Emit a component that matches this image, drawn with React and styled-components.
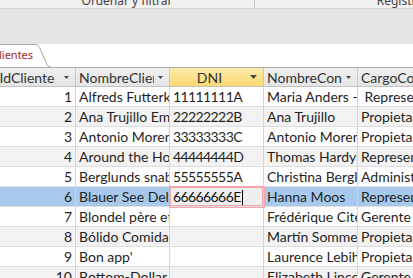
import React from "react";
import styled, { createGlobalStyle } from "styled-components";

const Global = createGlobalStyle`
  html, body { margin: 0; padding: 0; background: #ffffff; overflow: hidden; }
  #root { width: 413px; height: 278px; }
`;

const Screen = styled.div`
  width: 413px;
  height: 278px;
  overflow: hidden;
  display: flex;
  flex-direction: column;
  background: #ffffff;
`;

const GroupBar = styled.div`
  flex: none;
  height: 8px;
  display: flex;
  background: #f1f1f1;
  border-bottom: 1px solid #d3d3d3;
  overflow: hidden;
`;

const Group = styled.div`
  flex: none;
  width: ${(p) => p.$w}px;
  height: 8px;
  display: flex;
  align-items: flex-end;
  justify-content: center;
  border-right: ${(p) => (p.$sep ? "1px solid #c4c4c4" : "none")};
  box-sizing: border-box;
`;

const GroupLabel = styled.span`
  font-family: "Noto Sans", sans-serif;
  font-size: 12px;
  line-height: 12px;
  color: #444444;
  white-space: nowrap;
  margin-bottom: 1px;
`;

const Ribbon = styled.div`
  flex: none;
  height: 35px;
  background: #e4e4e4;
`;

const TabStrip = styled.div`
  flex: none;
  height: 23px;
  display: flex;
  background: #ffffff;
`;

const Tab = styled.div`
  display: flex;
  margin-left: -9px;
`;

const TabLabel = styled.div`
  border-top: 1px solid #a8a8a8;
  padding-left: 1px;
  font-family: "Noto Sans", sans-serif;
  font-size: 11px;
  line-height: 20px;
  color: #a4262c;
  white-space: nowrap;
`;

const TabEdge = () => (
  <svg width="18" height="23" viewBox="0 0 18 23" style={{ flex: "none" }}>
    <path
      d="M0 0.5 L2 0.5 C4.5 0.5 5.5 1.5 6.5 3.5 L14 20.5 C14.8 22 15.5 22.5 17.5 22.5"
      fill="none"
      stroke="#a3a3a3"
      strokeWidth="1"
    />
  </svg>
);

const Grid = styled.div`
  margin-left: -9px;
  display: flex;
  flex-direction: column;
  border-top: 1px solid #ababab;
`;

const Row = styled.div`
  display: grid;
  grid-template-columns: 85px 94px 94px 94px 94px;
  height: ${(p) => (p.$head ? 19 : 20)}px;
  background: ${(p) => (p.$sel ? "#a7caec" : p.$alt ? "#f2f2f2" : "#ffffff")};
`;

const HeadCell = styled.div`
  box-sizing: border-box;
  display: flex;
  align-items: center;
  padding: 0 6px 0 3px;
  border-right: 1px solid #c8c8c8;
  border-bottom: 1px solid #c3c3c3;
  background: ${(p) =>
    p.$active
      ? "linear-gradient(#fdebab, #fcd970)"
      : "linear-gradient(#efefef, #e4e5e7)"};
  overflow: hidden;
`;

const HeadText = styled.span`
  flex: 1;
  min-width: 0;
  overflow: hidden;
  white-space: nowrap;
  text-align: center;
  font-family: Lato, sans-serif;
  font-size: 14px;
  line-height: 18px;
  padding-top: 1px;
  color: #333333;
`;

const Arrow = ({ big }) => {
  const w = big ? 7 : 5;
  const h = big ? 4 : 3;
  return (
    <svg width={w} height={h} viewBox={`0 0 ${w} ${h}`} style={{ flex: "none", marginLeft: 4 }}>
      <path d={`M0 0 L${w} 0 L${w / 2} ${h} Z`} fill="#444444" />
    </svg>
  );
};

const Cell = styled.div`
  box-sizing: border-box;
  padding: 1px 3px 0 3px;
  border-right: 1px solid #d4d4d4;
  border-bottom: 1px solid #dedede;
  font-family: Lato, sans-serif;
  font-size: 14px;
  line-height: 18px;
  letter-spacing: ${(p) => (p.$code ? "-0.6px" : "0")};
  color: #1f1f1f;
  white-space: pre;
  overflow: hidden;
  text-align: ${(p) => (p.$num ? "right" : "left")};
`;

const EditCell = styled(Cell)`
  position: relative;
  z-index: 1;
  background: #efefef;
  box-shadow: 0 0 0 1px #f3a7ac, inset 0 0 0 1px #f3a7ac;
  color: #111111;
`;

const Caret = styled.span`
  display: inline-block;
  width: 1px;
  height: 15px;
  margin-left: 1px;
  background: #000000;
  vertical-align: -3px;
`;

const headers = ["IdCliente", "NombreCliente", "DNI", "NombreContacto", "CargoContacto"];

const rows = [
  [1, "Alfreds Futterkiste", "11111111A", "Maria Anders - Alfreds", " Representante de ventas"],
  [2, "Ana Trujillo Emparedados y helados", "22222222B", "Ana Trujillo", "Propietario"],
  [3, "Antonio Moreno Taquería", "33333333C", "Antonio Moreno", "Propietario"],
  [4, "Around the Horn", "44444444D", "Thomas Hardy", "Representante de ventas"],
  [5, "Berglunds snabbköp", "55555555A", "Christina Berglund", "Administrador de pedidos"],
  [6, "Blauer See Delikatessen", "66666666E", "Hanna Moos", "Representante de ventas"],
  [7, "Blondel père et fils", "", "Frédérique Citeaux", "Gerente de marketing"],
  [8, "Bólido Comidas preparadas", "", "Martín Sommer", "Propietario"],
  [9, "Bon app'", "", "Laurence Lebihan", "Propietario"],
  [10, "Bottom-Dollar Markets", "", "Elizabeth Lincoln", "Gerente de contabilidad"],
];

export default function App() {
  return (
    <Screen>
      <Global />
      <GroupBar>
        <Group $w={255} $sep>
          <GroupLabel>Ordenar y filtrar</GroupLabel>
        </Group>
        <Group $w={296}>
          <GroupLabel>Registros</GroupLabel>
        </Group>
      </GroupBar>
      <Ribbon />
      <TabStrip>
        <Tab>
          <TabLabel>Clientes</TabLabel>
          <TabEdge />
        </Tab>
      </TabStrip>
      <Grid>
        <Row $head>
          {headers.map((h, i) => (
            <HeadCell key={h} $active={i === 2}>
              <HeadText>{h}</HeadText>
              <Arrow big={i === 2} />
            </HeadCell>
          ))}
        </Row>
        {rows.map((r, idx) => {
          const sel = r[0] === 6;
          return (
            <Row key={r[0]} $alt={idx % 2 === 1} $sel={sel}>
              <Cell $num>{r[0]}</Cell>
              <Cell>{r[1]}</Cell>
              {sel ? (
                <EditCell $code>
                  {r[2]}
                  <Caret />
                </EditCell>
              ) : (
                <Cell $code>{r[2]}</Cell>
              )}
              <Cell>{r[3]}</Cell>
              <Cell>{r[4]}</Cell>
            </Row>
          );
        })}
      </Grid>
    </Screen>
  );
}
